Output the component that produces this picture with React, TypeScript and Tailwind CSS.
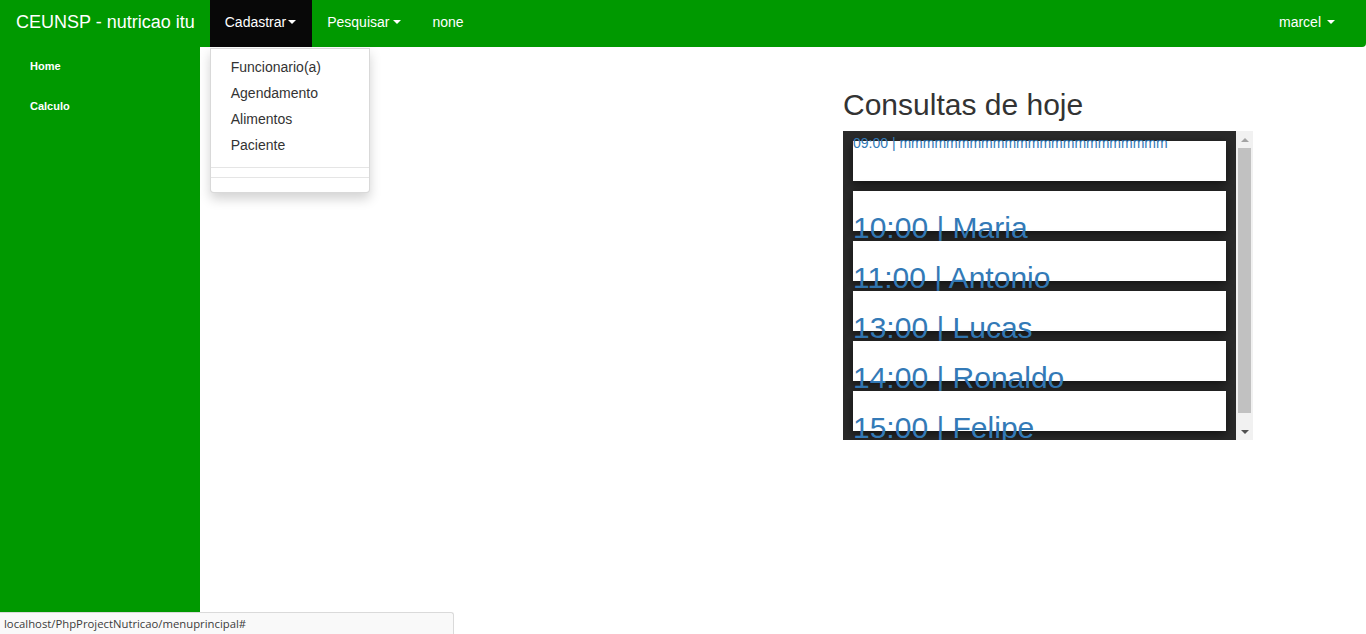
import React from 'react';

const consultas = [
  { hora: '10:00', nome: 'Maria' },
  { hora: '11:00', nome: 'Antonio' },
  { hora: '13:00', nome: 'Lucas' },
  { hora: '14:00', nome: 'Ronaldo' },
  { hora: '15:00', nome: 'Felipe' },
];

function Caret() {
  return (
    <span className="inline-block h-0 w-0 border-x-[4px] border-t-[4px] border-x-transparent border-t-white align-middle" />
  );
}

export default function App() {
  return (
    <div
      className="relative h-[634px] overflow-hidden bg-white text-[14px] text-[#333]"
      style={{ fontFamily: '"Liberation Sans", Arial, sans-serif' }}
    >
      {/* Navbar */}
      <nav className="relative z-10 flex h-[47px] items-stretch rounded-br-[4px] bg-[#009900] pr-[16px] text-white">
        <a href="#" className="pl-[16px] pr-[15px] pt-[12px] text-[18px] leading-[20px]">
          CEUNSP - nutricao itu
        </a>
        <div className="relative flex">
          <a href="#" className="flex items-start bg-[#080808] pl-[15px] pr-[16px] pt-[12px] leading-[20px]">
            Cadastrar
            <span className="ml-[2px] flex h-[20px] items-center">
              <Caret />
            </span>
          </a>
          {/* dropdown */}
          <ul className="absolute left-0 top-[48px] w-[160px] rounded-b-[4px] border border-black/15 bg-white py-[5px] text-[#333] shadow-[0_6px_12px_rgba(0,0,0,0.175)]">
            {['Funcionario(a)', 'Agendamento', 'Alimentos', 'Paciente'].map(item => (
              <li key={item}>
                <a href="#" className="block px-[20px] py-[3px] leading-[20px]">
                  {item}
                </a>
              </li>
            ))}
            <li className="my-[9px] h-px bg-[#e5e5e5]" />
            <li className="mb-[9px] h-px bg-[#e5e5e5]" />
          </ul>
        </div>
        <a href="#" className="flex items-start gap-[4px] px-[15px] pt-[12px] leading-[20px]">
          Pesquisar
          <span className="flex h-[20px] items-center">
            <Caret />
          </span>
        </a>
        <a href="#" className="px-[16px] pt-[12px] leading-[20px]">
          none
        </a>
        <div className="flex-1" />
        <a href="#" className="flex items-start gap-[6px] pl-[13px] pr-[15px] pt-[12px] leading-[20px]">
          marcel
          <span className="flex h-[20px] items-center">
            <Caret />
          </span>
        </a>
      </nav>

      <div className="flex">
        {/* Sidebar */}
        <aside className="h-[587px] w-[200px] shrink-0 bg-[#009900] pt-[9px]">
          <ul className="text-[11px] font-bold leading-[14px] text-white">
            <li>
              <a href="#" className="block px-[30px] py-[3px]">Home</a>
            </li>
            <li className="mt-[20px]">
              <a href="#" className="block px-[30px] py-[3px]">Calculo</a>
            </li>
          </ul>
        </aside>

        {/* Main */}
        <main className="flex-1">
          <div className="ml-[643px] w-[410px]">
            <h1 className="mb-[10px] mt-[41px] text-[30px] font-normal leading-[33px] text-[#333]">
              Consultas de hoje
            </h1>
            <div className="flex h-[309px] bg-[#2a2a2a]">
              <div className="flex-1 overflow-hidden">
                <ul className="flex flex-col gap-[10px] p-[10px] text-[#337ab7]">
                  <li className="h-[40px] bg-white shadow-[0_3px_10px_rgba(0,0,0,0.6)]">
                    <span className="-mt-[8px] block text-[14px] leading-[20px]">
                      09:00 | mmmmmmmmmmmmmmmmmmmmmmm
                    </span>
                  </li>
                  {consultas.map(c => (
                    <li key={c.hora} className="h-[40px] bg-white shadow-[0_3px_10px_rgba(0,0,0,0.6)]">
                      <span className="block whitespace-nowrap pt-[20px] text-[30px] leading-[33px]">
                        {c.hora} | {c.nome}
                      </span>
                    </li>
                  ))}
                </ul>
              </div>
              {/* scrollbar */}
              <div className="flex w-[17px] flex-col bg-[#f1f1f1]">
                <div className="flex h-[17px] items-center justify-center">
                  <span className="h-0 w-0 border-x-[4px] border-b-[4px] border-x-transparent border-b-[#a3a3a3]" />
                </div>
                <div className="flex-1 px-[2px]">
                  <div className="h-[265px] bg-[#c1c1c1]" />
                </div>
                <div className="flex h-[17px] items-center justify-center">
                  <span className="h-0 w-0 border-x-[4px] border-t-[4px] border-x-transparent border-t-[#505050]" />
                </div>
              </div>
            </div>
          </div>
        </main>
      </div>

      {/* browser status bubble */}
      <div
        className="absolute bottom-0 left-0 z-20 h-[22px] w-[454px] rounded-tr-[3px] border-r border-t border-[#dadada] bg-[#f9f9f9] pl-[4px] text-[11.3px] leading-[21px] text-[#3c3c3c]"
        style={{ fontFamily: '"Open Sans", "Noto Sans", sans-serif' }}
      >
        localhost/PhpProjectNutricao/menuprincipal#
      </div>
    </div>
  );
}
